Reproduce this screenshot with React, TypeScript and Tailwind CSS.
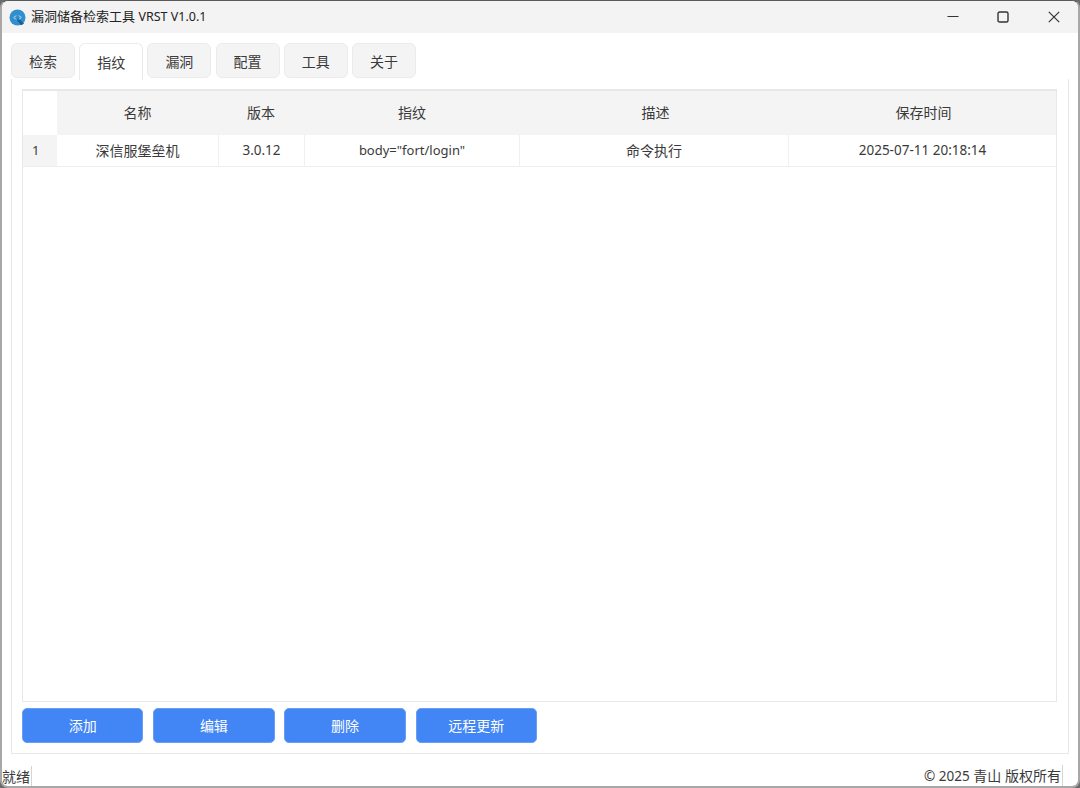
const FONT = '[font-family:"Noto_Sans","Noto_Sans_CJK_SC",sans-serif]'

const tabs = ['检索', '指纹', '漏洞', '配置', '工具', '关于']
const buttons = ['添加', '编辑', '删除', '远程更新']
const columns = ['名称', '版本', '指纹', '描述', '保存时间']
const row = ['深信服堡垒机', '3.0.12', 'body="fort/login"', '命令执行', '2025-07-11 20:18:14']

function AppIcon() {
  return (
    <svg width="17" height="17" viewBox="0 0 17 17" className="shrink-0">
      <circle cx="8.5" cy="8.5" r="8" fill="#2f8fd0" />
      <path d="M9 9l6 5.5a8 8 0 0 1-3 1.8L8 11z" fill="#1d5f92" />
      <path d="M7 6.5L5 8.5l2 2M10 6.5l2 2-2 2" fill="none" stroke="#dcecf7" strokeWidth="1" />
    </svg>
  )
}

function WindowControls() {
  return (
    <div className="ml-auto flex items-center gap-[38px] pr-[18px]">
      <svg width="12" height="12" viewBox="0 0 12 12" fill="none" stroke="#333" strokeWidth="1.2">
        <path d="M0.5 5.5h11" />
      </svg>
      <svg width="12" height="12" viewBox="0 0 12 12" fill="none" stroke="#333" strokeWidth="1.4">
        <rect x="1" y="1" width="10" height="10" rx="1.6" />
      </svg>
      <svg width="12" height="12" viewBox="0 0 12 12" fill="none" stroke="#333" strokeWidth="1.2" className="ml-px">
        <path d="M0.8 0.8l10.4 10.4M11.2 0.8L0.8 11.2" />
      </svg>
    </div>
  )
}

export default function App() {
  return (
    <div className={`h-[788px] w-[1080px] overflow-hidden bg-[#6b6b6b] text-[14px] text-[#3a3a3a] ${FONT}`}>
      <div className="flex h-full flex-col overflow-hidden rounded-lg border-x-2 border-b-2 border-t border-x-[#a8a8a8] border-b-[#a8a8a8] border-t-[#5a5a5a] bg-white">
        {/* Title bar */}
        <div className="flex h-[32px] shrink-0 items-center bg-[#f3f3f3] pl-[7px]">
          <AppIcon />
          <span className="ml-[5px] text-[13px] text-[#222]">
            漏洞储备检索工具 <span className="text-[12.5px]">VRST V1.0.1</span>
          </span>
          <WindowControls />
        </div>

        <div className="flex min-h-0 flex-1 flex-col px-[9px] pt-[10px]">
          {/* Tabs */}
          <div className="relative z-10 flex h-[36px] shrink-0 gap-[4.2px]">
            {tabs.map((t, i) => (
              <div
                key={t}
                className={`flex w-[64px] items-center justify-center border border-[#ebebeb] ${
                  i === 1 ? 'h-[37px] rounded-t-md border-b-0 bg-white' : 'h-[35px] rounded-md bg-[#f4f4f4] pt-[2px]'
                }`}
              >
                {t}
              </div>
            ))}
          </div>

          {/* Pane */}
          <div className="flex h-[675px] shrink-0 flex-col border-x border-b border-[#e8e8e8] pl-[10px] pr-[11px] pt-[10px]">
            <div className="h-[613px] shrink-0 border border-t-2 border-[#e8e8e8]">
              <div className="grid h-[44px] grid-cols-[34px_161px_86px_216px_271px_265px]">
                <div className="bg-white" />
                {columns.map((c) => (
                  <div key={c} className="flex items-center justify-center bg-[#f4f4f4] pb-[2px]">{c}</div>
                ))}
              </div>
              <div className="grid h-[32px] grid-cols-[34px_161px_86px_215px_269px_268px] border-b border-[#eeeeee]">
                <div className="flex items-center bg-[#f4f4f4] pl-[9px] text-[13px]">1</div>
                {row.map((c, i) => (
                  <div
                    key={c}
                    className={`flex items-center justify-center border-[#f0f0f0] ${i > 0 ? 'border-l' : ''} ${
                      i === 2 ? 'text-[13px]' : i === 0 || i === 3 ? '' : 'text-[13.5px]'
                    }`}
                  >
                    {c}
                  </div>
                ))}
              </div>
            </div>

            <div className="mt-[6px] flex gap-[9.8px]">
              {buttons.map((b) => (
                <div key={b} className="flex h-[35px] w-[121.4px] items-center justify-center rounded-[5px] border border-[#6a9ef6] bg-[#4285f4] text-white">
                  {b}
                </div>
              ))}
            </div>
          </div>

          {/* Status bar */}
          <div className="-mx-[9px] mt-[12px] flex h-[20px] items-center justify-between">
            <span className="border-r border-[#d5d5d5] pr-[1px]">就绪</span>
            <span className="mr-[15px] border-r border-[#d5d5d5] pr-[1px]">
              <span className="text-[13.5px]">© 2025</span> 青山 版权所有
            </span>
          </div>
        </div>
      </div>
    </div>
  )
}
